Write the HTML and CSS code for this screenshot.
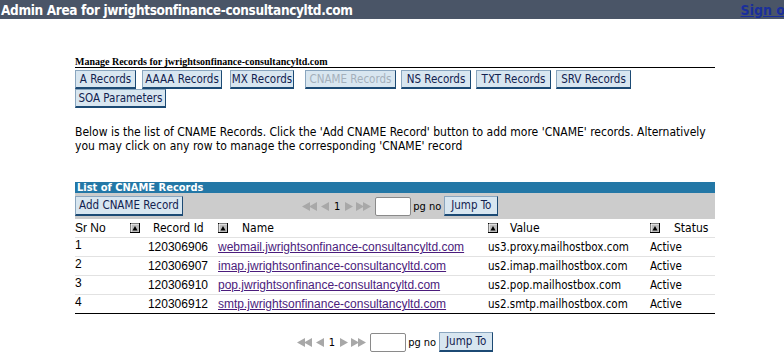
FILE: index.html
```html
<!DOCTYPE html>
<html>
<head>
<meta charset="utf-8">
<title>Admin Area</title>
<link rel="stylesheet" href="styles.css">
</head>
<body>
<div class="topbar">
  <span class="title">Admin Area for jwrightsonfinance-consultancyltd.com</span>
  <a class="signout" href="#">Sign out</a>
</div>
<div class="main">
  <div class="manage">Manage Records for jwrightsonfinance-consultancyltd.com</div>
  <div class="tabs">
    <button class="btn w-a">A Records</button>
    <button class="btn w-aaaa">AAAA Records</button>
    <button class="btn w-mx">MX Records</button>
    <button class="btn w-cname disabled">CNAME Records</button>
    <button class="btn w-ns">NS Records</button>
    <button class="btn w-txt">TXT Records</button>
    <button class="btn w-srv">SRV Records</button>
    <button class="btn w-soa">SOA Parameters</button>
  </div>
  <p class="intro">Below is the list of CNAME Records. Click the 'Add CNAME Record' button to add more 'CNAME' records. Alternatively you may click on any row to manage the corresponding 'CNAME' record</p>

  <div class="list">
    <div class="list-head">List of CNAME Records</div>
    <div class="toolbar">
      <button class="btn add">Add CNAME Record</button>
      <div class="pager top">
        <span class="arrows">
          <svg width="16" height="9" viewBox="0 0 16 9"><path d="M0 4.5L8 0V9Z M7 4.5L15 0V9Z" fill="#a8a8a8"/></svg>
          <svg width="10" height="9" viewBox="0 0 10 9"><path d="M1 4.5L9 0V9Z" fill="#a8a8a8"/></svg>
          <span class="pnum">1</span>
          <svg width="10" height="9" viewBox="0 0 10 9"><path d="M9 4.5L1 0V9Z" fill="#a8a8a8"/></svg>
          <svg width="16" height="9" viewBox="0 0 16 9"><path d="M8 4.5L0 0V9Z M15 4.5L7 0V9Z" fill="#a8a8a8"/></svg>
        </span>
        <span class="pinput"></span>
        <span class="pglabel">pg no</span>
        <button class="btn jump">Jump To</button>
      </div>
    </div>

    <div class="grid hdr">
      <div class="c1">Sr No</div>
      <div class="c2 sortcell"><svg class="sort" width="10" height="10" viewBox="0 0 10 10"><rect x="0.5" y="0.5" width="9" height="9" fill="#bdbdbd" stroke="#000"/><path d="M1 9V1H9" fill="none" stroke="#fff"/><path d="M2.5 7.5L5 3L7.5 7.5Z" fill="#000"/></svg><span class="lbl">Record Id</span></div>
      <div class="c3 sortcell"><svg class="sort" width="10" height="10" viewBox="0 0 10 10"><rect x="0.5" y="0.5" width="9" height="9" fill="#bdbdbd" stroke="#000"/><path d="M1 9V1H9" fill="none" stroke="#fff"/><path d="M2.5 7.5L5 3L7.5 7.5Z" fill="#000"/></svg><span class="lbl">Name</span></div>
      <div class="c4 sortcell"><svg class="sort" width="10" height="10" viewBox="0 0 10 10"><rect x="0.5" y="0.5" width="9" height="9" fill="#bdbdbd" stroke="#000"/><path d="M1 9V1H9" fill="none" stroke="#fff"/><path d="M2.5 7.5L5 3L7.5 7.5Z" fill="#000"/></svg><span class="lbl">Value</span></div>
      <div class="c5 sortcell"><svg class="sort" width="10" height="10" viewBox="0 0 10 10"><rect x="0.5" y="0.5" width="9" height="9" fill="#bdbdbd" stroke="#000"/><path d="M1 9V1H9" fill="none" stroke="#fff"/><path d="M2.5 7.5L5 3L7.5 7.5Z" fill="#000"/></svg><span class="lbl">Status</span></div>
    </div>
    <div class="grid row">
      <div class="c1 num">1</div><div class="c2 rid">120306906</div>
      <div class="c3"><a href="#">webmail.jwrightsonfinance-consultancyltd.com</a></div>
      <div class="c4 val">us3.proxy.mailhostbox.com</div><div class="c5 val">Active</div>
    </div>
    <div class="grid row">
      <div class="c1 num">2</div><div class="c2 rid">120306907</div>
      <div class="c3"><a href="#">imap.jwrightsonfinance-consultancyltd.com</a></div>
      <div class="c4 val">us2.imap.mailhostbox.com</div><div class="c5 val">Active</div>
    </div>
    <div class="grid row">
      <div class="c1 num">3</div><div class="c2 rid">120306910</div>
      <div class="c3"><a href="#">pop.jwrightsonfinance-consultancyltd.com</a></div>
      <div class="c4 val">us2.pop.mailhostbox.com</div><div class="c5 val">Active</div>
    </div>
    <div class="grid row last">
      <div class="c1 num">4</div><div class="c2 rid">120306912</div>
      <div class="c3"><a href="#">smtp.jwrightsonfinance-consultancyltd.com</a></div>
      <div class="c4 val">us2.smtp.mailhostbox.com</div><div class="c5 val">Active</div>
    </div>

    <div class="pager bottom">
      <span class="arrows">
        <svg width="16" height="9" viewBox="0 0 16 9"><path d="M0 4.5L8 0V9Z M7 4.5L15 0V9Z" fill="#a8a8a8"/></svg>
        <svg width="10" height="9" viewBox="0 0 10 9"><path d="M1 4.5L9 0V9Z" fill="#a8a8a8"/></svg>
        <span class="pnum">1</span>
        <svg width="10" height="9" viewBox="0 0 10 9"><path d="M9 4.5L1 0V9Z" fill="#a8a8a8"/></svg>
        <svg width="16" height="9" viewBox="0 0 16 9"><path d="M8 4.5L0 0V9Z M15 4.5L7 0V9Z" fill="#a8a8a8"/></svg>
      </span>
      <span class="pinput"></span>
      <span class="pglabel">pg no</span>
      <button class="btn jump">Jump To</button>
    </div>
  </div>
</div>
</body>
</html>
```

FILE: styles.css
```css
html, body {
  margin: 0;
  padding: 0;
  background: #fff;
  font-family: "DejaVu Sans Condensed", "DejaVu Sans", sans-serif;
  font-size: 11px;
  color: #000;
}

.topbar {
  height: 19px;
  background: #4a5567;
  display: flex;
  align-items: center;
  overflow: hidden;
  white-space: nowrap;
}
.title {
  color: #fff;
  font-weight: bold;
  font-size: 13.5px;
  letter-spacing: -0.35px;
  padding-left: 1px;
  flex: 1;
}
.signout {
  color: #1a2f9c;
  font-weight: bold;
  font-size: 14px;
  margin-right: -16px;
  text-decoration: underline;
}

.main {
  margin-left: 75px;
  width: 640px;
}

.manage {
  margin-top: 37px;
  font-family: "Liberation Serif", serif;
  font-weight: bold;
  font-size: 10px;
  line-height: 11px;
  border-bottom: 1px solid #000;
  height: 11px;
}

.tabs {
  display: flex;
  flex-wrap: wrap;
  margin-top: 2px;
  width: 640px;
}

.btn {
  font-family: "DejaVu Sans Condensed", "DejaVu Sans", sans-serif;
  font-size: 11.5px;
  color: #12224f;
  background: #d8e6f0;
  border: 1px solid #8aa6bf;
  border-right: 1px solid #1c4a74;
  border-bottom: 2px solid #1c4a74;
  height: 19px;
  padding: 0;
  margin: 0;
  line-height: 15px;
  white-space: nowrap;
  text-align: center;
}
.btn.disabled {
  color: #a4b0bb;
}
.w-a { width: 61px; margin-right: 6px; }
.w-aaaa { width: 80px; margin-right: 8px; }
.w-mx { width: 64px; margin-right: 11px; }
.w-cname { width: 91px; margin-right: 5px; }
.w-ns { width: 70px; margin-right: 5px; }
.w-txt { width: 75px; margin-right: 5px; }
.w-srv { width: 75px; }
.w-soa { width: 91px; }

.intro {
  margin: 17px 0 0;
  line-height: 14px;
  font-size: 12px;
  width: 640px;
}

.list {
  margin-top: 29px;
}
.list-head {
  background: #2377a6;
  color: #fff;
  font-weight: bold;
  font-size: 11px;
  height: 11px;
  line-height: 11px;
  padding-left: 2px;
  overflow: hidden;
}
.toolbar {
  background: #cccccc;
  height: 26px;
  display: flex;
  align-items: center;
}
.btn.add {
  height: 20px;
  width: 108px;
}

.pager {
  display: flex;
  align-items: center;
}
.pager.top {
  margin-left: 119px;
}
.pager.bottom {
  justify-content: center;
  margin-top: 18px;
}
.arrows {
  display: flex;
  align-items: center;
  gap: 2px;
}
.pnum {
  color: #000;
  font-size: 11px;
  padding: 0 2px;
}
.pinput {
  display: inline-block;
  width: 34px;
  height: 17px;
  background: #fff;
  border: 1px solid #8a8a8a;
  border-radius: 2px;
  margin-left: 3px;
}
.pglabel {
  margin-left: 2px;
  margin-right: 3px;
}
.btn.jump {
  height: 20px;
  width: 54px;
}

.grid {
  display: grid;
  grid-template-columns: 52px 88px 270px 162px 68px;
  align-items: center;
}
.hdr {
  height: 18px;
  border-bottom: 1px solid #e2e2e2;
}
.sortcell {
  display: flex;
  align-items: center;
  padding-left: 3px;
  font-size: 12px;
}
.sort {
  flex: none;
}
.c2 .lbl { margin-left: 13px; }
.c3 .lbl { margin-left: 14px; }
.c4 .lbl { margin-left: 12px; }
.c5 .lbl { margin-left: 14px; }
.c1 {
  font-family: "Liberation Sans", Arial, sans-serif;
  font-size: 12px;
}

.row {
  height: 18px;
  border-bottom: 1px solid #e2e2e2;
  font-family: "Liberation Sans", Arial, sans-serif;
  font-size: 12px;
}
.row.last {
  border-bottom: 1px solid #000;
}
.num {
  align-self: start;
  line-height: 14px;
}
.rid {
  text-align: right;
  padding-right: 7px;
}
.c3 a {
  color: #4b1c7c;
  padding-left: 3px;
}
.val {
  font-family: "DejaVu Sans Condensed", "DejaVu Sans", sans-serif;
  font-size: 11.5px;
  padding-left: 3px;
}
```
